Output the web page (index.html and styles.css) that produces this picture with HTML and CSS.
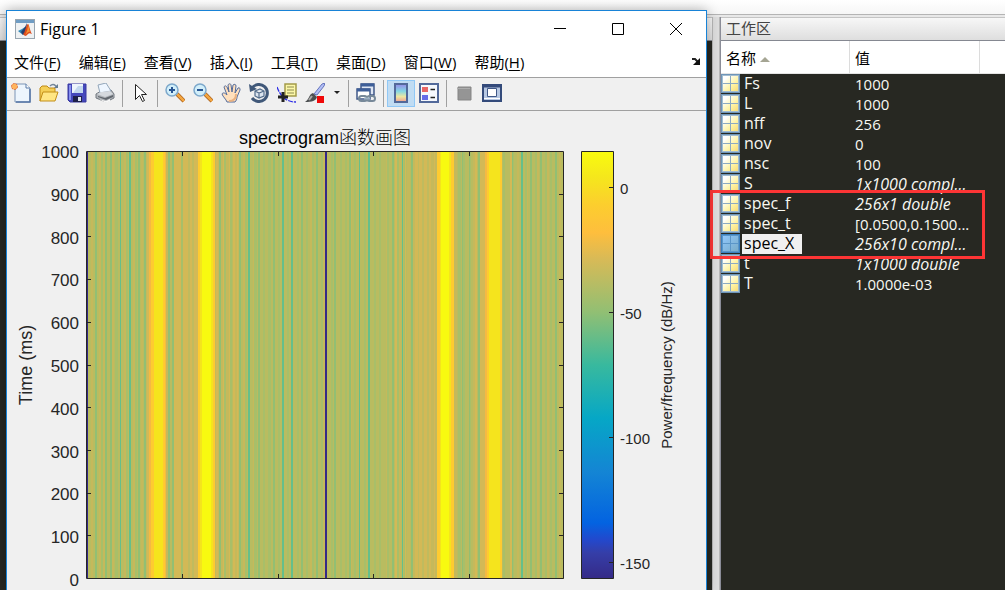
FILE: index.html
```html
<!DOCTYPE html>
<html lang="zh-CN">
<head>
<meta charset="utf-8">
<title>Figure 1</title>
<link rel="stylesheet" href="styles.css">
</head>
<body>
<div class="desktop">
  <div class="strip"></div>
  <div class="docks">
    <div class="editor"><div class="dock-title"></div></div>
    <div class="splitter"></div>
    <section class="workspace">
      <h2 class="dock-title">工作区</h2>
      <table class="vars">
        <thead><tr><th class="name">名称<span class="sort"></span></th><th class="value">值</th><th></th></tr></thead>
        <tbody>
          <tr><td><i class="grid-icon"></i><span class="label">Fs</span></td><td>1000</td><td></td></tr>
          <tr><td><i class="grid-icon"></i><span class="label">L</span></td><td>1000</td><td></td></tr>
          <tr><td><i class="grid-icon"></i><span class="label">nff</span></td><td>256</td><td></td></tr>
          <tr><td><i class="grid-icon"></i><span class="label">nov</span></td><td>0</td><td></td></tr>
          <tr><td><i class="grid-icon"></i><span class="label">nsc</span></td><td>100</td><td></td></tr>
          <tr><td><i class="grid-icon"></i><span class="label">S</span></td><td><em>1x1000 compl...</em></td><td></td></tr>
          <tr><td><i class="grid-icon"></i><span class="label">spec_f</span></td><td><em>256x1 double</em></td><td></td></tr>
          <tr><td><i class="grid-icon"></i><span class="label">spec_t</span></td><td>[0.0500,0.1500...</td><td></td></tr>
          <tr class="selected"><td><i class="grid-icon"></i><span class="label">spec_X</span></td><td><em>256x10 compl...</em></td><td></td></tr>
          <tr><td><i class="grid-icon"></i><span class="label">t</span></td><td><em>1x1000 double</em></td><td></td></tr>
          <tr><td><i class="grid-icon"></i><span class="label">T</span></td><td>1.0000e-03</td><td></td></tr>
        </tbody>
      </table>
      <div class="marker"></div>
    </section>
  </div>

  <main class="figure">
    <header class="titlebar">
      <svg width="20" height="20" viewBox="0 0 20 20"><rect x=".5" y=".5" width="19" height="19" fill="#eef1f3" stroke="#98a5b0"/><path d="M1 2.5h18" stroke="#6e9cc4" stroke-width="3"/><path d="M3 12l4-2 3-2 2 3-4 5z" fill="#2f86b5"/><path d="M6 13l4-5 2-4-1 9-3 3z" fill="#263f70"/><path d="M8 15c2 0 3-10 5-10 1 0 2 7 4 10-2-1-3-1-4 0s-2 2-3 2z" fill="#dc4a1c"/><path d="M13 5c0 4-1 8-3 11 2-1 3-4 5-3z" fill="#f59331"/></svg>
      <h1>Figure 1</h1>
      <div class="controls">
        <button aria-label="最小化"><svg width="12" height="12"><path d="M0 5.5h12" stroke="#000"/></svg></button>
        <button aria-label="最大化"><svg width="12" height="12"><path d="M.5.5h11v11H.5z" fill="none" stroke="#000"/></svg></button>
        <button aria-label="关闭"><svg width="12" height="12"><path d="M0 0l12 12M12 0L0 12" stroke="#000"/></svg></button>
      </div>
    </header>
    <nav class="menu">
      <button>文件(<u>F</u>)</button><button>编辑(<u>E</u>)</button><button>查看(<u>V</u>)</button><button>插入(<u>I</u>)</button><button>工具(<u>T</u>)</button><button>桌面(<u>D</u>)</button><button>窗口(<u>W</u>)</button><button>帮助(<u>H</u>)</button>
      <svg class="dock-arrow" width="9" height="8" viewBox="0 0 9 8"><path d="M0 1h3l3 3" fill="none" stroke="#222" stroke-width="2"/><path d="M8 0v7H1z" fill="#111"/></svg>
    </nav>
    <div class="toolbar">
      <button aria-label="新建"><svg width="20" height="20" viewBox="0 0 20 20"><path d="M4 1h11l4 4v14H4z" fill="#edf5fd" stroke="#7d95b6"/><path d="M15 1v4h4" fill="#fff" stroke="#587aa8"/><path d="M19 6v13H5" fill="none" stroke="#5474a5" stroke-width="1.5"/><circle cx="3.5" cy="3.5" r="3" fill="#ffb45d" stroke="#d9643c" stroke-dasharray="2 1"/></svg></button>
      <button aria-label="打开"><svg width="20" height="20" viewBox="0 0 20 20"><path d="M1 18V5l2-2h5l2 2h6v5" fill="#f4cf57" stroke="#bf8a16"/><path d="M1 18l3-9h15l-3 9z" fill="#ffe684" stroke="#c28e19"/><path d="M11 3c3-3 6-1 7 2" fill="none" stroke="#74879b" stroke-width="1.5"/><path d="M15 5h4V1z" fill="#647b91"/></svg></button>
      <button aria-label="保存"><svg width="20" height="20" viewBox="0 0 20 20"><path d="M1 1h18v18H3l-2-2z" fill="#4548bb" stroke="#3838a1"/><path d="M2 2h2v15H2z" fill="#8790ee"/><path d="M5 1h11v9H5z" fill="#edf4fc"/><path d="M11 3h5v7H6z" fill="#c2d7ee"/><path d="M6 13h9v6H6z" fill="#1e2049"/><path d="M11 14h3v4h-3z" fill="#dce3ee"/></svg></button>
      <button aria-label="打印"><svg width="20" height="20" viewBox="0 0 20 20"><path d="M1 11l5-3 10-1 3 4v4l-8 4-10-4z" fill="#b0b4b9" stroke="#737980"/><path d="M5 10L3 2l8-2 5 8z" fill="#eef6ff" stroke="#93a6ba"/><path d="M2 11l4-2 9-1 3 3-8 3z" fill="#d5d9de"/><path d="M3 14l8 3 7-3v-2l-8 3-7-2z" fill="#61676e"/><path d="M4 16l7 2 4-2v2l-4 2z" fill="#f8f8f8"/></svg></button>
      <span class="sep"></span>
      <button aria-label="选择"><svg width="20" height="20" viewBox="0 0 20 20"><path d="M5.5 1.5v15l4-4 3 6 2-1-3-6h5z" fill="#fff" stroke="#222"/></svg></button>
      <span class="sep"></span>
      <button aria-label="放大"><svg width="20" height="20" viewBox="0 0 20 20"><path d="M12 11l7 7" stroke="#a75c17" stroke-width="4"/><path d="M12 11l7 7" stroke="#f4a640" stroke-width="2.5"/><circle cx="7" cy="7" r="6" fill="#d2effa" stroke="#7da8cb" stroke-width="1.5"/><path d="M4 7h6M7 4v6" stroke="#285593" stroke-width="2"/></svg></button>
      <button aria-label="缩小"><svg width="20" height="20" viewBox="0 0 20 20"><path d="M12 11l7 7" stroke="#a75c17" stroke-width="4"/><path d="M12 11l7 7" stroke="#f4a640" stroke-width="2.5"/><circle cx="7" cy="7" r="6" fill="#d2effa" stroke="#7da8cb" stroke-width="1.5"/><path d="M4 7h6" stroke="#285593" stroke-width="2"/></svg></button>
      <button aria-label="平移"><svg width="20" height="20" viewBox="0 0 20 20"><path d="M6 19c-1-3-4-5-5-8 1-2 3-1 5 1L3 4c1-2 2-1 3 0l2 5-1-7c1-2 3-1 3 0l1 7 1-7c1-1 3-1 3 1l-1 7 3-5c2-1 2 1 2 2l-3 7c0 2-1 4-2 5z" fill="#ffe0bd" stroke="#536b9b"/><path d="M8 18c4 0 7-2 7-7" fill="none" stroke="#e9b180" stroke-width="2"/></svg></button>
      <button aria-label="三维旋转"><svg width="20" height="20" viewBox="0 0 20 20"><path d="M3 5a8.500 8.500 0 1 1 0 10" fill="none" stroke="#405879" stroke-width="3"/><path d="M0 1l1 8 7-3z" fill="#405879"/><path d="M6 8l5-2 4 2v5l-5 2-4-2zM6 8l4 2 5-2M10 10v5" fill="#dce5f0" stroke="#536c8b" stroke-width="1.2"/></svg></button>
      <button aria-label="数据游标"><svg width="20" height="20" viewBox="0 0 20 20"><path d="M0 4c3 8 8 15 19 15" fill="none" stroke="#2b2be5" stroke-width="1.3" stroke-dasharray="5 1"/><path d="M8 1h11v12H8z" fill="#fbf7a8" stroke="#a39a49" stroke-width="1.5"/><path d="M10 4h7M10 7h7M10 10h7" stroke="#8e8b52"/><path d="M1 14h10M6 9v10" stroke="#222" stroke-width="3"/></svg></button>
      <button aria-label="刷亮"><svg width="20" height="20" viewBox="0 0 20 20"><path d="M9 11L17 1l3-1-1 3-7 9z" fill="#b3bff6" stroke="#6574bc"/><path d="M8 10l4 4c-1 4-5 5-12 5 5-3 3-7 8-9z" fill="#4d5052"/><path d="M7 13l-3 4" stroke="#aaa" stroke-width="2"/><path d="M12 13h7v7h-7z" fill="#f00909"/></svg></button>
      <button class="drop" aria-label="刷亮选项"><svg width="6" height="4"><path d="M0 0h6L3 3z" fill="#222"/></svg></button>
      <span class="sep"></span>
      <button aria-label="链接绘图"><svg width="20" height="20" viewBox="0 0 20 20"><path d="M5 1h13v11H5z" fill="#dfe7f4" stroke="#405888" stroke-width="1.5"/><path d="M5 2h13" stroke="#3e5f99" stroke-width="3"/><path d="M1 6h13v10H1z" fill="#fff" stroke="#405888" stroke-width="1.5"/><path d="M1 7h13" stroke="#3e5f99" stroke-width="3"/><rect x="3" y="13" width="8" height="5" rx="2.5" fill="none" stroke="#778999" stroke-width="2"/><rect x="11" y="13" width="8" height="5" rx="2.5" fill="none" stroke="#778999" stroke-width="2"/><path d="M8 15.5h6" stroke="#9cb0c2" stroke-width="2"/></svg></button>
      <span class="sep"></span>
      <button class="on" aria-label="颜色栏" aria-pressed="true"><svg width="20" height="20" viewBox="0 0 20 20"><defs><linearGradient id="cb" x2="0" y2="1"><stop stop-color="#9687e8"/><stop offset=".4" stop-color="#83d7e5"/><stop offset=".7" stop-color="#eee8a1"/><stop offset="1" stop-color="#ef9b92"/></linearGradient></defs><path d="M4 1h12v18H4z" fill="url(#cb)" stroke="#52699a" stroke-width="2"/></svg></button>
      <button aria-label="图例"><svg width="20" height="20" viewBox="0 0 20 20"><path d="M1 1h18v18H1z" fill="#f5f8fd" stroke="#52699a" stroke-width="2"/><path d="M3 4h6v5H3z" fill="#e86565"/><path d="M3 12h6v5H3z" fill="#666be8"/><path d="M11.5 6.5H16M11.5 14.5H16" stroke="#222" stroke-width="1.5"/></svg></button>
      <span class="sep"></span>
      <button aria-label="隐藏绘图工具"><svg width="20" height="20" viewBox="0 0 20 20"><path d="M4 4h13v13H4z" fill="#959595" stroke="#858585"/><path d="M3 5.5h13" stroke="#adadad"/></svg></button>
      <button aria-label="显示绘图工具"><svg width="20" height="20" viewBox="0 0 20 20"><path d="M1 2h18v16H1z" fill="#b7c8e3" stroke="#344b7b" stroke-width="2"/><path d="M1 3h18" stroke="#344b7b" stroke-width="3"/><path d="M5.5 5.5h9v8h-9z" fill="#fff" stroke="#405888"/><path d="M2 15.5h16" stroke="#fff"/></svg></button>
    </div>

    <svg class="plot" viewBox="7 111 699 479" role="img" aria-label="spectrogram函数画图">
      <defs>
        <linearGradient id="parula" x1="0" y1="1" x2="0" y2="0">
          <stop stop-color="#352a87"/><stop offset=".06" stop-color="#353ea8"/><stop offset=".09" stop-color="#2348cc"/><stop offset=".13" stop-color="#0363e1"/><stop offset=".25" stop-color="#1485d4"/><stop offset=".375" stop-color="#06a7c6"/><stop offset=".5" stop-color="#38b99e"/><stop offset=".625" stop-color="#92bf73"/><stop offset=".75" stop-color="#d9ba56"/><stop offset=".81" stop-color="#febe3d"/><stop offset=".875" stop-color="#fcce2e"/><stop offset=".94" stop-color="#f5e71c"/><stop offset="1" stop-color="#f9fb0e"/>
        </linearGradient>
      </defs>
      <text class="plot-title" x="325" y="144">spectrogram函数画图</text>
      <rect x="87" y="152" width="477" height="427" fill="#b9bc60"/>
      <g id="stripes"></g>
      <path d="M86.5 151.5H563.5V578.5H86.5z" class="axis"/>
      <path d="M87.5 152v426" stroke="#352a87"/>
      <path id="ticks" class="axis"/>
      <g class="ylabels">
        <text x="79" y="158">1000</text><text x="79" y="201">900</text><text x="79" y="244">800</text><text x="79" y="286">700</text><text x="79" y="329">600</text><text x="79" y="372">500</text><text x="79" y="415">400</text><text x="79" y="458">300</text><text x="79" y="500">200</text><text x="79" y="543">100</text><text x="79" y="586">0</text>
      </g>
      <text class="ytitle" transform="translate(32 365) rotate(-90)">Time (ms)</text>
      <path d="M581.5 151.5H613.5V578.5H581.5z" fill="url(#parula)" stroke="#262626"/>
      <path class="axis" d="M609 187.5h5M609 312.5h5M609 437.5h5M609 562.5h5"/>
      <g class="clabels"><text x="620" y="194">0</text><text x="620" y="319">-50</text><text x="620" y="444">-100</text><text x="620" y="569">-150</text></g>
      <text class="ctitle" transform="translate(672 365) rotate(-90)">Power/frequency (dB/Hz)</text>
    </svg>
  </main>
</div>
<script src="plot.js"></script>
</body>
</html>
```

FILE: plot.js
```js
// Frequency bands of the spectrogram: colour, then start and width of each band.
const bands = {
  '#c5b95b': [91,2, 99,2, 103,3, 112,2, 124,2, 133,2, 141,2, 146,3, 166,2, 215,4, 221,3, 226,4, 234,5, 243,3, 253,2, 269,2, 310,2, 322,3, 340,2, 350,2, 386,3, 398,3, 407,3, 413,24, 454,3, 473,3, 511,3, 517,2, 526,2, 537,2, 547,2, 559,2],
  '#d3b956': [147,2, 174,7, 183,5, 189,4, 194,4, 216,2, 223,1, 229,1, 233,2, 237,1, 395,2, 404,2, 415,3, 419,3, 424,3, 429,2, 434,1, 475,2, 480,5, 510,2],
  '#c0bb5e': [188,2, 192,2, 418,1, 422,2, 427,2],
  '#a8bf69': [101,2, 115,3, 126,2, 135,2, 181,2, 224,2, 230,2, 245,2, 254,3, 263,2, 268,3, 278,2, 287,2, 297,2, 306,2, 312,2, 321,2, 331,2, 340,2, 345,2, 354,2, 364,2, 374,2, 379,2, 387,2, 397,2, 404,1, 458,3, 463,2, 469,2, 503,2, 512,2, 525,2, 535,2, 545,2, 550,2],
  '#92bf73': [95,2, 105,2, 110,2, 138,2, 144,2, 168,2, 172,2, 219,2, 239,2, 258,2, 273,2, 301,2, 316,2, 334,2, 349,2, 392,2, 411,2, 462,1, 469,1, 478,2, 512,1, 530,2, 540,2, 555,2],
  '#65bf8b': [120,1, 129,2, 248,2, 282,2, 291,2, 359,1, 368,2, 402,1, 521,2],
  '#f5b943': [149,3, 164,2, 485,2],
  '#fecb30': [151,3, 162,3, 198,3, 213,2, 437,3, 451,3, 487,2, 499,3],
  '#f5e41d': [154,9, 200,2, 210,3, 440,2, 449,2, 489,11],
  '#f8fa10': [202,9, 441,8],
  '#352a87': [325,2]
};
document.getElementById('stripes').innerHTML = Object.entries(bands).map(([color, b]) => {
  let d = '';
  for (let i = 0; i < b.length; i += 2) d += `M${b[i]} 152h${b[i + 1]}V578h-${b[i + 1]}z`;
  return `<path fill="${color}" d="${d}"/>`;
}).join('');

let ticks = '';
for (let i = 1; i < 10; i++) {
  const y = Math.round(151 + i * 42.7) + 0.5;
  ticks += `M87 ${y}h4M564 ${y}h-5`;
}
for (const x of [182.5, 278.5, 373.5, 469.5]) ticks += `M${x} 152v4M${x} 578v-4`;
document.getElementById('ticks').setAttribute('d', ticks);
```

FILE: styles.css
```css
* { box-sizing: border-box; }
body { margin: 0; font: 15px/20px "Open Sans", "Noto Sans CJK SC", sans-serif; color: #000; }
button { border: 0; padding: 0; background: none; font: inherit; color: inherit; }
h1, h2 { margin: 0; font-size: 15px; font-weight: 400; }
h1 { font-size: 16px; }

.desktop { position: relative; display: flex; flex-direction: column; min-height: 100vh; overflow: hidden; background: #272822; }
.strip { height: 15px; background: linear-gradient(#fff, #f6f6f6); border-bottom: 1px solid #b4b4b4; }
.docks { flex: 1; display: flex; padding-top: 2px; background: #e8e8e8; }
.editor { flex: 1; background: #272822; }
.splitter { width: 8px; background: #dedede; border: solid #b8b8b8; border-width: 0 1px; }
.dock-title { height: 24px; padding: 0 5px; line-height: 20px; color: #444; background: linear-gradient(#f7f7f7, #dedede); border-top: 1px solid #c4c4c4; border-bottom: 1px solid #858891; }
.workspace { position: relative; width: 285px; background: #272822; border-left: 1px solid #8c8e99; }

.vars { width: 100%; table-layout: fixed; border-collapse: separate; border-spacing: 0; color: #f8f8f2; }
.vars th { height: 33px; padding: 2px 5px 0; text-align: left; font-weight: 400; color: #000; background: #fff; border-right: 1px solid #dcdcdc; border-bottom: 1px solid #e4e4e4; }
.vars th:last-child { border-right: 0; }
.vars .name { width: 129px; }
.vars .value { width: 130px; }
.sort { display: inline-block; margin: 0 4px; border: solid transparent; border-width: 0 5px 5px; border-bottom-color: #a5a593; vertical-align: middle; }
.vars td { height: 20px; padding: 0 0 0 5px; line-height: 20px; white-space: nowrap; }
.vars td:first-child { display: flex; align-items: flex-start; padding: 0; }
.vars em { font-size: 16px; }
.grid-icon { width: 19px; height: 19px; border: 1px solid #6e95b8; background: linear-gradient(#8caac2, #8caac2) center / 1px 100% no-repeat, linear-gradient(#8caac2, #8caac2) center / 100% 1px no-repeat, linear-gradient(135deg, #fff 20%, #fff4a6 60%, #f5d870); box-shadow: inset 0 0 0 1px #a3bccf; }
.label { height: 20px; margin-left: 2px; padding: 0 2px; font-size: 16px; line-height: 19px; }
.selected .label { padding-right: 8px; color: #000; background: #f0f0f0; }
.selected .grid-icon { border-color: #3a80c0; background: linear-gradient(#5b96c8, #5b96c8) center / 1px 100% no-repeat, linear-gradient(#5b96c8, #5b96c8) center / 100% 1px no-repeat, linear-gradient(135deg, #91c8ff, #78abc4); box-shadow: inset 0 0 0 1px #5b96c8; }
.marker { position: absolute; left: -11px; top: 173px; width: 275px; height: 69px; border: 3px solid #fd3535; pointer-events: none; }

.figure { position: absolute; left: 6px; top: 10px; right: 298px; bottom: 0; overflow: hidden; background: #f0f0f0; border: 1px solid #1883d7; border-bottom: 0; box-shadow: 0 0 12px rgba(0, 0, 0, .3); }
.titlebar { display: flex; align-items: center; gap: 5px; height: 36px; padding-left: 8px; background: #fff; }
.controls { display: flex; margin-left: auto; padding-right: 1px; }
.controls button { display: grid; place-items: center; width: 58px; height: 36px; }
.menu { display: flex; align-items: center; gap: 18px; height: 30px; padding: 0 5px 0 7px; background: #fff; }
.menu u { text-underline-offset: 2px; }
.dock-arrow { margin-left: auto; }
.toolbar { display: flex; align-items: center; height: 34px; padding-bottom: 2px; border-top: 1px solid #a0a0a0; border-bottom: 1px solid #a0a0a0; }
.toolbar button { display: grid; place-items: center; width: 28px; height: 27px; }
.toolbar .drop { width: 16px; }
.toolbar .on { background: #c0dcf3; border: 1px solid #90c8f6; }
.sep { width: 1px; height: 27px; margin: 0 3px; background: #a0a0a0; }

.plot { display: block; width: 100%; font-family: "Liberation Sans", "Noto Sans CJK SC", sans-serif; fill: #262626; }
.axis { fill: none; stroke: #262626; }
.plot-title { font-size: 18px; fill: #000; text-anchor: middle; font-weight: 300; }
.ylabels { font-size: 17px; text-anchor: end; }
.ytitle { font-size: 18px; text-anchor: middle; }
.clabels { font-size: 15px; }
.ctitle { font-size: 15px; text-anchor: middle; }
```
